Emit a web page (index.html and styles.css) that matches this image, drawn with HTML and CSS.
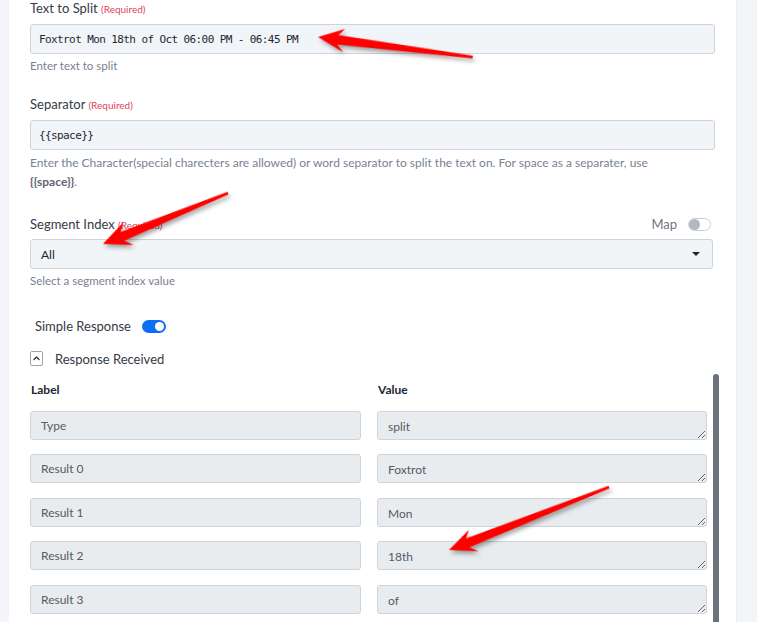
FILE: index.html
```html
<!DOCTYPE html>
<html lang="en">
<head>
<meta charset="utf-8">
<title>Text Splitter</title>
<link rel="stylesheet" href="styles.css">
</head>
<body>
<div class="page">
  <aside class="gutter"></aside>
  <main class="panel">
    <div class="field">
      <div class="field-label">Text to Split <span class="req">(Required)</span></div>
      <div class="input mono">Foxtrot Mon 18th of Oct 06:00 PM - 06:45 PM</div>
      <p class="hint">Enter text to split</p>
    </div>

    <div class="field field-sep">
      <div class="field-label">Separator <span class="req">(Required)</span></div>
      <div class="input mono">{{space}}</div>
      <p class="hint hint-long">Enter the Character(special charecters are allowed) or word separator to split the text on. For space as a separater, use <b>{{space}}</b>.</p>
    </div>

    <div class="field field-seg">
      <div class="label-row">
        <div class="field-label">Segment Index <span class="req">(Required)</span></div>
        <div class="map">
          <span class="map-text">Map</span>
          <span class="switch switch-off"><span class="knob"></span></span>
        </div>
      </div>
      <div class="input select">
        <span>All</span>
        <span class="caret"></span>
      </div>
      <p class="hint">Select a segment index value</p>
    </div>

    <div class="simple-row">
      <span>Simple Response</span>
      <span class="switch switch-on"><span class="knob"></span></span>
    </div>

    <div class="received-row">
      <span class="collapse-btn">
        <svg width="11" height="13" viewBox="0 0 11 13"><path d="M3 7.5 L5.5 5 L8 7.5" fill="none" stroke="#333" stroke-width="1.3" stroke-linecap="round" stroke-linejoin="round"/></svg>
      </span>
      <span>Response Received</span>
    </div>

    <div class="response">
      <div class="grid">
        <div class="col-head">Label</div>
        <div class="col-head">Value</div>

        <div class="cell">Type</div>
        <textarea class="value" readonly>split</textarea>

        <div class="cell">Result 0</div>
        <textarea class="value" readonly>Foxtrot</textarea>

        <div class="cell">Result 1</div>
        <textarea class="value" readonly>Mon</textarea>

        <div class="cell">Result 2</div>
        <textarea class="value" readonly>18th</textarea>

        <div class="cell">Result 3</div>
        <textarea class="value" readonly>of</textarea>
      </div>
      <div class="scrollbar"></div>
    </div>
  </main>
  <aside class="rail"></aside>

  <!-- red callout arrows drawn over the form -->
  <svg class="marks" width="757" height="622" viewBox="0 0 757 622">
    <g class="arrows" fill="#ff0000">
      <path transform="translate(318 37) rotate(7.35)" d="M0 0 L26 -11.5 L20 -4.5 L156 -1.3 L156 1.5 L20 5 L27 12 Z"/>
      <path transform="translate(103 244) rotate(-22.2)" d="M0 0 L27 -12.5 L21 -4.5 L135 -1.3 L135 1.5 L21 5 L28 12.5 Z"/>
      <path transform="translate(449 550) rotate(-21.5)" d="M0 0 L26 -11.5 L20 -4.5 L172 -1.3 L172 1.5 L20 5 L27 12 Z"/>
    </g>
  </svg>
</div>
</body>
</html>
```

FILE: styles.css
```css
* { box-sizing: border-box; }

body {
  margin: 0;
  font-family: Lato, "Noto Sans", sans-serif;
  color: #3d424d;
  background: #f3f5f8;
}

.page {
  position: relative;
  display: flex;
  width: 757px;
  height: 622px;
  overflow: hidden;
}

.gutter {
  flex: none;
  width: 9px;
  background: #f3f5f8;
}

.panel {
  flex: none;
  width: 727px;
  padding: 0 21px;
  background: #fff;
}

.rail {
  flex: 1;
  background: #f3f5f8;
  border-left: 1px solid #e9ecf1;
}

/* form fields */
.field-label {
  font-size: 13px;
  line-height: 16px;
  color: #353a45;
  margin-bottom: 7px;
}

.req {
  font-size: 10px;
  color: #e0435a;
}

.input {
  height: 30px;
  border: 1px solid #cfd4dc;
  border-radius: 3px;
  background: #f2f5f8;
  display: flex;
  align-items: center;
  padding-left: 8px;
  color: #1e2533;
}

.mono {
  font-family: "DejaVu Sans Mono", monospace;
  font-size: 11px;
  letter-spacing: -0.6px;
}

.hint {
  margin: 4px 0 0;
  font-size: 11.5px;
  line-height: 16px;
  color: #7b8190;
}

.hint-long {
  max-width: 660px;
  margin-top: 3px;
  font-size: 12px;
  line-height: 19px;
}

.hint-long b {
  color: #5f6572;
}

.field-sep { margin-top: 22px; }
.field-seg { margin-top: 25px; }

.label-row {
  display: flex;
  justify-content: space-between;
  align-items: center;
  height: 16px;
  margin-bottom: 7px;
  padding-right: 4px;
}

.label-row .field-label { margin-bottom: 0; }

.map {
  display: flex;
  align-items: center;
  gap: 11px;
}

.map-text {
  font-size: 13px;
  color: #6f7582;
}

.select {
  margin-right: 2px;
  justify-content: space-between;
  padding: 0 12px 0 10px;
  font-size: 12px;
  color: #1e2533;
}

.caret {
  width: 0;
  height: 0;
  border-left: 4px solid transparent;
  border-right: 4px solid transparent;
  border-top: 4px solid #222;
}

/* toggles */
.switch {
  position: relative;
  display: inline-block;
  width: 23px;
  height: 13px;
  border-radius: 7px;
}

.switch .knob {
  position: absolute;
  top: 1px;
  width: 11px;
  height: 11px;
  border-radius: 50%;
}

.switch-off {
  background: #fff;
  border: 1px solid #c9ced6;
}

.switch-off .knob {
  top: 0;
  left: 0;
  background: #b3b9c1;
}

.switch-on {
  background: #0b6ef5;
  width: 24px;
}

.switch-on .knob {
  right: 2px;
  top: 2px;
  width: 9px;
  height: 9px;
  background: #fff;
}

.simple-row {
  display: flex;
  align-items: center;
  gap: 11px;
  margin-top: 29px;
  padding-left: 5px;
  height: 16px;
  font-size: 13px;
  color: #353a45;
}

.received-row {
  display: flex;
  align-items: center;
  gap: 12px;
  margin-top: 17px;
  height: 15px;
  font-size: 13px;
  color: #353a45;
}

.collapse-btn {
  display: flex;
  align-items: center;
  justify-content: center;
  width: 13px;
  height: 15px;
  border: 1px solid #9ea4ad;
  border-radius: 2px;
}

/* response table */
.response {
  display: flex;
  margin-top: 8px;
  padding-top: 8px;
  height: 260px;
}

.grid {
  display: grid;
  grid-template-columns: 331px 330px;
  grid-auto-rows: 29px;
  grid-template-rows: 14px;
  column-gap: 16px;
  row-gap: 14.5px;
  align-content: start;
}

.col-head {
  height: 16px;
  font-size: 12px;
  font-weight: 700;
  line-height: 16px;
  color: #23262d;
  padding-left: 1px;
}

.cell,
.value {
  height: 29px;
  border: 1px solid #cfd4dc;
  border-radius: 3px;
  background: #e9ecef;
  font-family: Lato, "Noto Sans", sans-serif;
  font-size: 12px;
  color: #555a64;
}

.cell {
  display: flex;
  align-items: center;
  padding-left: 10px;
}

.value {
  width: 100%;
  margin: 0;
  padding: 6px 10px 0;
  line-height: 17px;
  resize: vertical;
  overflow: hidden;
  outline: none;
}

.scrollbar {
  flex: none;
  width: 6px;
  margin-left: 6px;
  margin-top: -8px;
  background: #6b727c;
  border-radius: 3px 3px 0 0;
}

/* callout overlay */
.marks {
  position: absolute;
  top: 0;
  left: 0;
  pointer-events: none;
}

.arrows {
  filter: drop-shadow(2px 3px 2px rgba(0, 0, 0, 0.35));
}
```
